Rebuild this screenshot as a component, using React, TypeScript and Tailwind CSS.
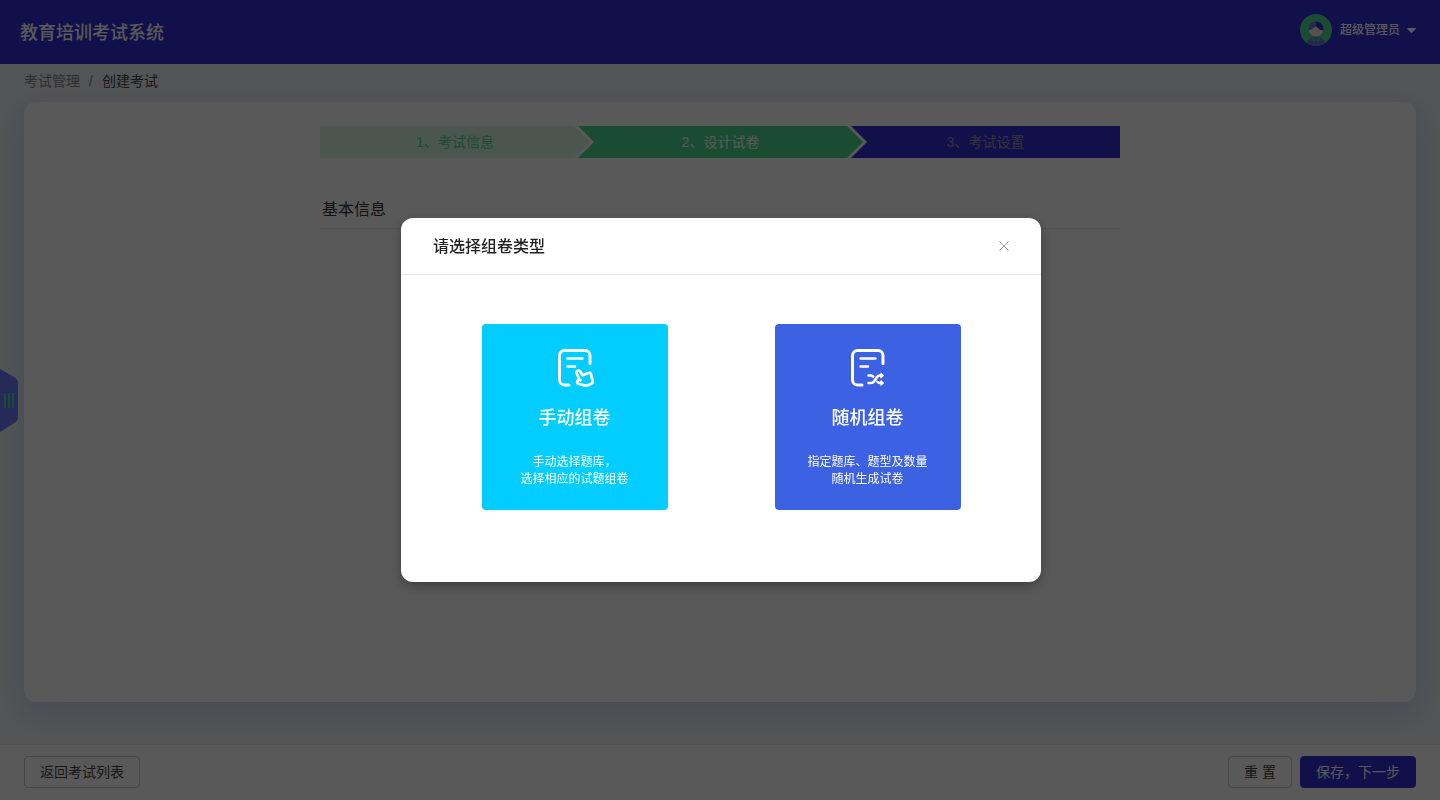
import React from 'react';

const STEPS = [
  {
    label: '1、考试信息',
    className:
      'flex-[270] bg-[#d9f5e5] text-[#48db89] [clip-path:polygon(0_0,calc(100%_-_16px)_0,100%_50%,calc(100%_-_16px)_100%,0_100%)]',
  },
  {
    label: '2、设计试卷',
    className:
      '-ml-3 flex-[285] bg-[#48db89] text-white [clip-path:polygon(0_0,calc(100%_-_16px)_0,100%_50%,calc(100%_-_16px)_100%,0_100%,16px_50%)]',
  },
  {
    label: '3、考试设置',
    className:
      '-ml-3 flex-[269] bg-[#332ed3] text-[#999999] [clip-path:polygon(0_0,100%_0,100%_100%,0_100%,16px_50%)]',
  },
];

function Avatar() {
  return (
    <svg viewBox="0 0 32 32" className="size-8" aria-hidden="true">
      <defs>
        <clipPath id="avatar-clip">
          <circle cx="16" cy="16" r="16" />
        </clipPath>
      </defs>
      <g clipPath="url(#avatar-clip)">
        <rect width="32" height="32" fill="#48db89" />
        <path d="M6.500 32C7 26.500 10 22.500 16 22.500S25 26.500 25.500 32Z" fill="#6a78d8" />
        <path d="M12 23.500 15.500 26 13 27.500ZM20 23.500 16.500 26 19 27.500Z" fill="#48db89" />
        <path d="M8.800 16C9.500 20.500 12.500 22.500 16 22.500S22.500 20.500 23.200 16Z" fill="#fbe3dc" />
        <path d="M8.500 16.500C8.300 11 11 7.500 16 7.500V12.500C13.500 13.500 11.500 16 8.500 16.500Z" fill="#6a78d8" />
        <path d="M16 7.500C21 7.500 23.800 11 23.500 16.500 20 16.500 18.500 14.500 16 12.500Z" fill="#332ed3" />
        <path d="M8.800 17.200 15 13 16 12.500 20 16 23.200 17 22 19H10Z" fill="#fbe3dc" />
      </g>
    </svg>
  );
}

function PaperOutline() {
  return (
    <>
      <path d="M34 15.500V7.500A5 5 0 0 0 29 2.500H8.500A5 5 0 0 0 3.500 7.500V32A5 5 0 0 0 8.500 37H13" />
      <path d="M11.500 10.500H26.500M11.500 18.500H19" strokeWidth="2.500" />
    </>
  );
}

function ManualIcon() {
  return (
    <svg
      viewBox="-1 0 40 40"
      className="size-10"
      fill="none"
      stroke="currentColor"
      strokeWidth="3"
      strokeLinecap="round"
      strokeLinejoin="round"
      aria-hidden="true"
    >
      <PaperOutline />
      <path
        d="M22.500 29.200 20.700 25.200C20 22.800 22.800 21.600 24.200 23.500L26.700 27.200 32.300 25C33.700 24.500 34.700 25.200 35 26.300L36.700 33.300C36.900 34.200 36.700 34.800 36 35.200L31.500 37.500C30.700 37.900 30.200 37.900 29.500 37.700L23 36C21.300 35.500 20.800 34.500 21.300 33.300L22.600 31.200 24.500 32.200"
        strokeWidth="2.800"
      />
    </svg>
  );
}

function RandomIcon() {
  return (
    <svg
      viewBox="-1 0 40 40"
      className="size-10"
      fill="none"
      stroke="currentColor"
      strokeWidth="3"
      strokeLinecap="round"
      strokeLinejoin="round"
      aria-hidden="true"
    >
      <PaperOutline />
      <path
        d="M19.500 27.500H22Q23.500 27.500 24.200 28.700M19.500 35H22Q24 35 25 33.500L28 29Q29 27.500 31 27.500H33M28.300 33.700Q29.300 35 31 35H33"
        strokeWidth="2.500"
      />
      <path d="M32 25.500 34.200 27.500 32 29.500ZM32 33 34.200 35 32 37Z" fill="currentColor" strokeWidth="1.500" />
    </svg>
  );
}

const PAPER_TYPES = [
  {
    title: '手动组卷',
    lines: ['手动选择题库，', '选择相应的试题组卷'],
    className: 'bg-[#03ccff]',
    Icon: ManualIcon,
  },
  {
    title: '随机组卷',
    lines: ['指定题库、题型及数量', '随机生成试卷'],
    className: 'bg-[#3d61e3]',
    Icon: RandomIcon,
  },
];

function PaperTypeDialog() {
  return (
    <div className="fixed inset-0 z-20 flex items-center justify-center bg-black/65 py-4 pr-4 pl-[18px]">
      <section
        role="dialog"
        aria-modal="true"
        aria-labelledby="dialog-title"
        className="w-full max-w-[640px] rounded-xl bg-white shadow-[0_4px_12px_rgba(0,0,0,0.3)]"
      >
        <header className="flex h-[57px] items-center justify-between border-b border-[#e8e8e8] px-8">
          <h2 id="dialog-title" className="pt-[2px] text-base font-medium text-[#222222]">
            请选择组卷类型
          </h2>
          <button type="button" aria-label="关闭" className="text-[#999999]">
            <svg viewBox="0 0 10 10" className="size-[10px]" fill="none" stroke="currentColor" aria-hidden="true">
              <path d="M.5.5 9.500 9.500M9.500.5.5 9.500" />
            </svg>
          </button>
        </header>
        <div className="flex flex-wrap justify-center gap-x-[107px] gap-y-6 pt-[49px] pb-[72px]">
          {PAPER_TYPES.map(({ title, lines, className, Icon }) => (
            <button
              key={title}
              type="button"
              className={`flex h-[186px] w-[186px] flex-col items-center rounded pt-6 text-white ${className}`}
            >
              <Icon />
              <span className="mt-[18px] text-lg leading-6 font-medium">{title}</span>
              <span className="mt-6 text-xs leading-[17px]">
                {lines.map((line) => (
                  <span key={line} className="block">
                    {line}
                  </span>
                ))}
              </span>
            </button>
          ))}
        </div>
      </section>
    </div>
  );
}

export default function App() {
  return (
    <div className="flex min-h-screen flex-col bg-[#edf0f4] font-['Liberation_Sans','Noto_Sans_CJK_SC',sans-serif] text-sm text-[#444444]">
      <header className="flex h-16 items-center justify-between bg-[#332ed3] pr-6 pl-5 text-white">
        <h1 className="pt-[2px] text-lg font-medium">教育培训考试系统</h1>
        <button type="button" className="flex items-center gap-2 pb-1 text-xs font-medium">
          <Avatar />
          <span className="flex items-center gap-[7px]">
            超级管理员
            <svg viewBox="0 0 9 5" className="h-[5px] w-[9px]" fill="currentColor" aria-hidden="true">
              <path d="M.6 0H8.400Q9.200.2 8.700.9L5 4.700Q4.500 5.200 4 4.700L.3.900Q-.2.2.6 0Z" />
            </svg>
          </span>
        </button>
      </header>

      <main className="flex flex-1 flex-col px-6 pb-[42px]">
        <nav aria-label="面包屑" className="flex h-[38px] gap-[9px] pt-[6px] leading-[22px]">
          <a href="#exams" className="text-[#858585]">
            考试管理
          </a>
          <span className="text-[#858585]">/</span>
          <span>创建考试</span>
        </nav>
        <section className="flex-1 rounded-xl bg-white px-6 pt-6 shadow-[0_10px_28px_rgba(70,90,255,0.16)]">
          <div className="mx-auto max-w-[800px]">
            <ol className="flex h-8">
              {STEPS.map((step) => (
                <li key={step.label} className={`flex items-center justify-center ${step.className}`}>
                  {step.label}
                </li>
              ))}
            </ol>
            <h2 className="mt-10 border-b border-[#e8e8e8] pb-[6px] pl-[2px] text-base leading-6 text-[#333333]">
              基本信息
            </h2>
          </div>
        </section>
      </main>

      <footer className="flex h-14 items-start justify-between border-t border-[#dddddd] bg-white px-6 pt-[11px]">
        <button type="button" className="h-8 rounded border border-[#c8c8c8] px-[15px]">
          返回考试列表
        </button>
        <div className="flex gap-2">
          <button type="button" className="h-8 rounded border border-[#c8c8c8] px-[15px]">
            重 置
          </button>
          <button type="button" className="h-8 rounded border border-[#332ed3] bg-[#332ed3] px-[15px] text-white">
            保存，下一步
          </button>
        </div>
      </footer>

      <button type="button" aria-label="展开菜单" className="fixed top-1/2 left-0 z-10 -translate-y-1/2">
        <svg viewBox="0 0 18 64" className="h-16 w-[18px]" aria-hidden="true">
          <path d="M0 1 14 9Q18 11.500 18 15V49Q18 53 14 55L0 64Z" fill="#6a78ff" />
          <path d="M5 25V40M9 25V40M13 25V40" stroke="#48db89" strokeWidth="2" />
        </svg>
      </button>

      <PaperTypeDialog />
    </div>
  );
}
